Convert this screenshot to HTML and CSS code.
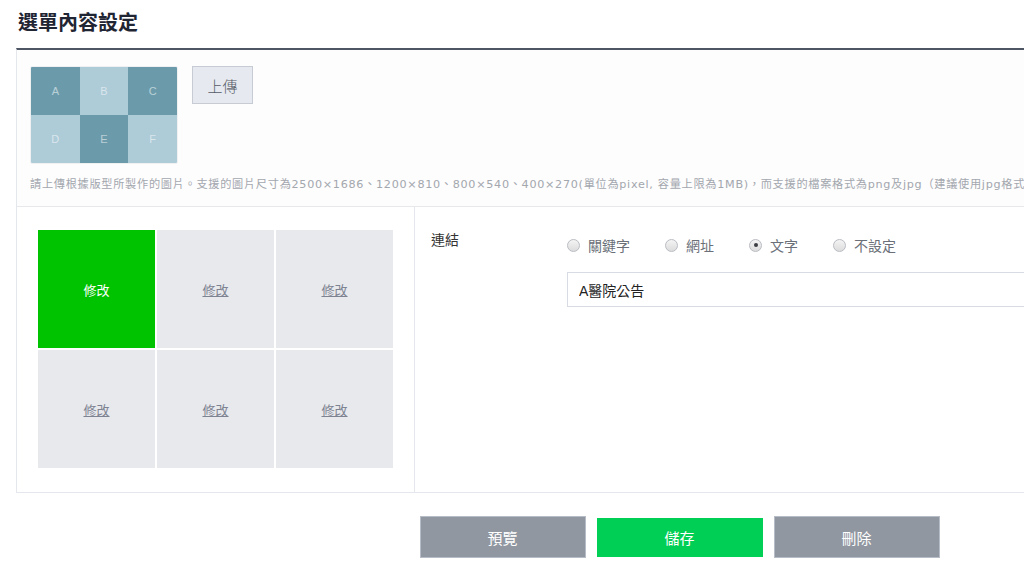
FILE: index.html
```html
<!DOCTYPE html>
<html lang="zh-Hant">

<head>
    <meta charset="UTF-8">
    <meta name="viewport" content="width=device-width, initial-scale=1.0">
    <title>選單內容設定</title>
    <link rel="stylesheet" href="styles.css">
</head>

<body>
    <h1 class="page-title">選單內容設定</h1>

    <div class="panel">
        <div class="upload">
            <div class="upload-row">
                <div class="thumb">
                    <span class="dark">A</span>
                    <span class="light">B</span>
                    <span class="dark">C</span>
                    <span class="light">D</span>
                    <span class="dark">E</span>
                    <span class="light">F</span>
                </div>
                <button class="btn-upload">上傳</button>
            </div>
            <p class="hint">請上傳根據版型所製作的圖片。支援的圖片尺寸為2500×1686、1200×810、800×540、400×270(單位為pixel, 容量上限為1MB)，而支援的檔案格式為png及jpg（建議使用jpg格式）。</p>
        </div>

        <div class="editor">
            <div class="areas">
                <div class="area-grid">
                    <a class="area active">修改</a>
                    <a class="area">修改</a>
                    <a class="area">修改</a>
                    <a class="area">修改</a>
                    <a class="area">修改</a>
                    <a class="area">修改</a>
                </div>
            </div>

            <div class="props">
                <div class="prop-label">連結</div>
                <div class="prop-field">
                    <div class="radios">
                        <label class="radio"><span class="dot"></span>關鍵字</label>
                        <label class="radio"><span class="dot"></span>網址</label>
                        <label class="radio"><span class="dot checked"></span>文字</label>
                        <label class="radio"><span class="dot"></span>不設定</label>
                    </div>
                    <input class="text-input" type="text" value="A醫院公告">
                </div>
            </div>
        </div>
    </div>

    <div class="actions">
        <button class="btn btn-gray">預覽</button>
        <button class="btn btn-green">儲存</button>
        <button class="btn btn-gray">刪除</button>
    </div>
</body>

</html>
```

FILE: styles.css
```css
* {
    box-sizing: border-box;
    margin: 0;
    padding: 0;
    font-family: "Liberation Sans", "Noto Sans CJK TC", sans-serif;
}

body {
    background: #ffffff;
    width: 1343px;
    overflow: hidden;
    color: #333;
}

.page-title {
    height: 48px;
    padding: 8px 0 0 18px;
    font-size: 20px;
    line-height: 28px;
    font-weight: bold;
    color: #1f2533;
    font-family: "Noto Sans CJK TC", sans-serif;
}

.panel {
    margin-left: 16px;
    width: 1327px;
    border-top: 2px solid #4e5563;
    border-left: 1px solid #e4e7ec;
    border-bottom: 1px solid #e4e7ec;
}

/* upload area */
.upload {
    height: 157px;
    padding: 16px 13px 0;
    border-bottom: 1px solid #e6e8ec;
    background: #fdfdfd;
}

.upload-row {
    display: flex;
    align-items: flex-start;
    gap: 14px;
}

.thumb {
    width: 148px;
    height: 98px;
    display: grid;
    grid-template-columns: repeat(3, 1fr);
    border: 1px solid #eef0f2;
    border-radius: 2px;
    overflow: hidden;
}

.thumb span {
    display: flex;
    align-items: center;
    justify-content: center;
    font-size: 11px;
    color: rgba(255, 255, 255, 0.55);
}

.thumb .dark {
    background: #6b9bab;
}

.thumb .light {
    background: #aecbd8;
}

.btn-upload {
    width: 61px;
    height: 38px;
    background: #e6e9ef;
    border: 1px solid #c6cbd4;
    color: #555b66;
    font-size: 15px;
    font-weight: 300;
    font-family: "Noto Sans CJK TC", sans-serif;
}

.hint {
    margin-top: 14px;
    font-family: "DejaVu Sans", "Noto Sans CJK TC", sans-serif;
    font-size: 11.2px;
    line-height: 14px;
    letter-spacing: 0.7px;
    color: #a3a7ae;
    white-space: nowrap;
}

/* editor */
.editor {
    display: flex;
    height: 285px;
}

.areas {
    width: 398px;
    border-right: 1px solid #e4e7ec;
    padding: 23px 21px 0;
}

.area-grid {
    display: grid;
    grid-template-columns: repeat(3, 117px);
    grid-template-rows: repeat(2, 118px);
    gap: 2px;
}

.area {
    display: flex;
    align-items: center;
    justify-content: center;
    background: #e8e9ed;
    color: #7d8391;
    font-size: 13px;
    text-decoration: underline;
    cursor: pointer;
}

.area.active {
    background: #00c300;
    color: #ffffff;
    text-decoration: none;
}

.props {
    flex: 1;
    display: flex;
    padding: 24px 0 0 16px;
}

.prop-label {
    width: 136px;
    font-size: 14px;
    line-height: 18px;
    color: #333;
}

.prop-field {
    flex: 1;
    padding-top: 4px;
}

.radios {
    display: flex;
    height: 20px;
    align-items: center;
}

.radio {
    display: flex;
    align-items: center;
    gap: 8px;
    margin-right: 35px;
    font-size: 14px;
    color: #6a6f78;
}

.dot {
    width: 13px;
    height: 13px;
    border-radius: 50%;
    border: 1px solid #b9bcc2;
    background: linear-gradient(#f4f4f4, #dcdcdc);
    position: relative;
}

.dot.checked::after {
    content: "";
    position: absolute;
    left: 3.5px;
    top: 3.5px;
    width: 4px;
    height: 4px;
    border-radius: 50%;
    background: #3a3d42;
}

.text-input {
    display: block;
    margin-top: 17px;
    width: 100%;
    height: 35px;
    border: 1px solid #d8dbe1;
    padding: 0 11px;
    font-size: 14px;
    color: #222;
    outline: none;
}

/* bottom buttons */
.actions {
    margin: 23px 0 0 16px;
    width: 1327px;
    display: flex;
    justify-content: center;
    align-items: center;
    gap: 11px;
}

.btn {
    width: 166px;
    height: 42px;
    border: none;
    color: #ffffff;
    font-size: 15px;
    font-family: "Noto Sans CJK TC", sans-serif;
}

.btn-gray {
    background: #9097a1;
    border: 1px solid #b7bdc6;
}

.btn-green {
    height: 39px;
    background: #00cf55;
}
```
